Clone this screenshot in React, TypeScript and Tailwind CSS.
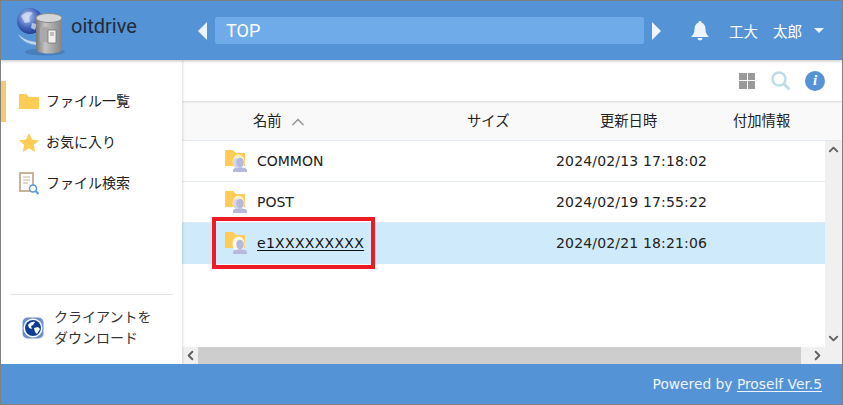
import React from 'react';
import { ChevronLeft, ChevronRight, ChevronUp, ChevronDown } from 'lucide-react';

const FONT = "font-['DejaVu_Sans','Noto_Sans_CJK_JP',sans-serif]";

const FolderIcon = () => (
  <svg width="20" height="15" viewBox="0 0 20 15">
    <path d="M0 0h7l3 3h10v12H0z" fill="#ffcc55" />
  </svg>
);

const SharedFolderIcon = ({ single }: { single?: boolean }) => (
  <svg width="24" height="22" viewBox="0 0 24 22">
    <path d="M0 0h8l3 3h9v13H0z" fill="#ffcc55" />
    <ellipse cx="13.500" cy="12" rx="6" ry="7.500" fill="#ffffff" opacity={single ? 0.9 : 0.7} />
    {!single && <ellipse cx="11" cy="13" rx="3" ry="5" fill="#d5d6ea" />}
    <ellipse cx="15" cy="12.500" rx="3.800" ry="4.800" fill="#b7b9dc" />
    <path d="M8 22v-2c0-1.800 4-2.800 7-2.800s7 1 7 2.800v2z" fill="#b7b9dc" />
  </svg>
);

const StarIcon = () => (
  <svg width="20" height="19" viewBox="0 0 20 19">
    <path d="M10 0l3 6.400 7 .8-5.200 4.700 1.400 7L10 15.300 3.800 18.900l1.400-7L0 7.200l7-.8z" fill="#ffcc55" />
  </svg>
);

const SearchDocIcon = () => (
  <svg width="21" height="23" viewBox="0 0 21 23">
    <path d="M1 1h13v18H1z" fill="#fff" stroke="#c8b396" strokeWidth="2" />
    <path d="M4 5h7M4 8h7M4 11h5" stroke="#c8b396" strokeWidth="1" />
    <circle cx="14" cy="16.500" r="3.500" fill="#fff" stroke="#5a97dc" strokeWidth="1.500" />
    <path d="M16.500 19l3 3" stroke="#5a97dc" strokeWidth="2" />
  </svg>
);

const GlobeBadge = () => (
  <svg width="22" height="22" viewBox="0 0 22 22">
    <rect x="0.500" y="0.500" width="21" height="21" rx="5" fill="#6d8fcb" />
    <circle cx="11" cy="11" r="9.500" fill="#fff" />
    <circle cx="11" cy="11" r="8" fill="#0f3c96" />
    <path d="M6 8c2-3 5-4 7-3l-2 3-2 1 1 3-3-1zM12 11l4-1 2 2-3 5-2-2z" fill="#fff" />
  </svg>
);

const AppLogo = () => (
  <svg width="52" height="50" viewBox="0 0 52 50">
    <defs>
      <radialGradient id="globe" cx="40%" cy="35%" r="70%">
        <stop offset="0%" stopColor="#b4cbf2" />
        <stop offset="60%" stopColor="#3f62b8" />
        <stop offset="100%" stopColor="#1d3a8c" />
      </radialGradient>
      <linearGradient id="can" x1="0" y1="0" x2="1" y2="0">
        <stop offset="0%" stopColor="#777" />
        <stop offset="35%" stopColor="#c4c4c4" />
        <stop offset="100%" stopColor="#858585" />
      </linearGradient>
    </defs>
    <ellipse cx="30" cy="46" rx="20" ry="3.500" fill="#3f6fa8" opacity="0.6" />
    <path d="M3 28c6 6 14 8 20 8v3C14 39 7 35 3 28z" fill="#e8eef8" opacity="0.7" />
    <circle cx="15" cy="15" r="13" fill="url(#globe)" />
    <path d="M6 10c4-4 8-5 12-3l-4 4 1 5-5 1zM17 17l5 1-2 6-4-2z" fill="#dfe6f5" opacity="0.7" />
    <path d="M21 12v31c0 3 6 4.500 13 4.500S47 46 47 43V12z" fill="url(#can)" />
    <ellipse cx="34" cy="12" rx="13" ry="4.500" fill="#d4d6d8" stroke="#8a8a8a" />
    <path d="M25 21h8l3 3v12H25z" fill="#a9a9a9" />
    <path d="M33 24h8v13h-8z" fill="#efefef" stroke="#777" strokeWidth="0.800" />
    <path d="M35 27h4M35 29h4" stroke="#777" strokeWidth="0.800" />
  </svg>
);

const NavItem = ({ icon, label, active }: { icon: React.ReactNode; label: string; active?: boolean }) => (
  <div className={`flex h-[41px] items-center text-[14px] text-[#222] ${active ? 'border-l-[5px] border-[#f5c871] pl-[13px]' : 'pl-[18px]'}`}>
    <span className="flex w-[27px] justify-start">{icon}</span>
    <span>{label}</span>
  </div>
);

const rows = [
  { name: 'COMMON', date: '2024/02/13 17:18:02' },
  { name: 'POST', date: '2024/02/19 17:55:22' },
  { name: 'e1XXXXXXXXX', date: '2024/02/21 18:21:06', selected: true },
];

export default function App() {
  return (
    <div className={`flex h-[405px] w-[843px] flex-col overflow-hidden border border-[#808080] bg-white ${FONT}`}>
      {/* header */}
      <header className="z-20 flex h-[59px] shrink-0 items-center bg-[#5593d7] shadow-[0_1px_3px_rgba(0,0,0,0.25)]">
        <div className="flex w-[195px] items-center pl-[14px] pt-[1px]">
          <AppLogo />
          <span className="-mt-[10px] ml-[4px] font-['Roboto',sans-serif] text-[20px] text-[#222b38]">oitdrive</span>
        </div>
        <svg width="9" height="18" viewBox="0 0 9 18" className="ml-[2px]"><path d="M9 0v18L0 9z" fill="#eef4fb" /></svg>
        <div className="ml-[8px] flex h-[27px] w-[429px] items-center rounded-[2px] bg-[#6faae9] pl-[11px] font-['Roboto',sans-serif] text-[18px] text-white">TOP</div>
        <svg width="9" height="18" viewBox="0 0 9 18" className="ml-[8px]"><path d="M0 0v18l9-9z" fill="#eef4fb" /></svg>
        <svg width="18" height="20" viewBox="0 0 18 20" className="ml-[30px]">
          <path d="M9 0a1.500 1.500 0 0 1 1.500 1.700C13 2.400 14.500 4.600 14.500 8c0 3.500 1 5.500 3.500 8H0c2.500-2.500 3.500-4.500 3.500-8 0-3.400 1.500-5.600 4-6.300A1.500 1.500 0 0 1 9 0z" fill="#eef4fb" />
          <path d="M6.500 17h5a2.500 2.500 0 0 1-5 0z" fill="#eef4fb" />
        </svg>
        <span className="ml-[20px] font-['Noto_Sans_CJK_JP',sans-serif] text-[14.500px] text-white">工大</span>
        <span className="ml-[15px] font-['Noto_Sans_CJK_JP',sans-serif] text-[14.500px] text-white">太郎</span>
        <svg width="10" height="5" viewBox="0 0 10 5" className="ml-[12px]"><path d="M0 0h10L5 5z" fill="#eef4fb" /></svg>
      </header>

      <div className="flex min-h-0 flex-1">
        {/* sidebar */}
        <aside className="z-10 flex w-[181px] shrink-0 flex-col bg-white shadow-[1px_0_2px_rgba(0,0,0,0.12)]">
          <nav className="flex flex-col pt-[21px]">
            <NavItem active icon={<FolderIcon />} label="ファイル一覧" />
            <NavItem icon={<StarIcon />} label="お気に入り" />
            <NavItem icon={<SearchDocIcon />} label="ファイル検索" />
          </nav>
          <div className="mx-[9px] mt-auto flex h-[70px] items-center border-t border-[#e4e4ec] pb-[3px] pl-[12px] text-[14px] leading-[21px] text-[#333]">
            <GlobeBadge />
            <span className="ml-[10px]">クライアントを<br />ダウンロード</span>
          </div>
        </aside>

        {/* main */}
        <main className="flex min-w-0 flex-1 flex-col">
          <div className="z-[5] flex h-[41px] shrink-0 items-center justify-end bg-white pr-[17px] shadow-[0_1px_2px_rgba(0,0,0,0.15)]">
            <div className="grid h-[16px] w-[16px] grid-cols-2 gap-[1px]">
              <span className="bg-[#9a9a9a]" /><span className="bg-[#9a9a9a]" /><span className="bg-[#9a9a9a]" /><span className="bg-[#9a9a9a]" />
            </div>
            <svg width="20" height="20" viewBox="0 0 20 20" className="ml-[16px]">
              <circle cx="8" cy="8" r="6.500" fill="none" stroke="#c0dcec" strokeWidth="2.500" />
              <path d="M12.500 12.500l6 6" stroke="#c0dcec" strokeWidth="3" />
            </svg>
            <span className="ml-[14px] flex h-[20px] w-[20px] items-center justify-center rounded-full bg-[#5593d7] font-['Liberation_Serif',serif] text-[15px] font-bold italic leading-none text-white">i</span>
          </div>

          <div className="flex h-[40px] shrink-0 items-center border-b border-[#e3e9f0] bg-[#f9f9f9] pt-[2px] text-[14.300px] text-[#222]">
            <span className="ml-[71px] flex w-[214px] items-center">名前<ChevronUp size={20} className="ml-[6px] text-[#999]" /></span>
            <span className="w-[133px]">サイズ</span>
            <span className="w-[133px]">更新日時</span>
            <span>付加情報</span>
          </div>

          <div className="flex min-h-0 flex-1">
            <div className="flex min-w-0 flex-1 flex-col">
              {rows.map((r) => (
                <div key={r.name} className={`relative flex h-[41px] shrink-0 items-center border-b pl-[43px] text-[14px] text-[#222] ${r.selected ? 'border-transparent bg-[#cfeafb]' : 'border-[#e3e9f0] bg-white'}`}>
                  <SharedFolderIcon single={r.selected} />
                  <span className={`ml-[8px] w-[299px] ${r.selected ? 'text-[#111] underline underline-offset-2 tracking-[0.3px]' : ''}`}>{r.name}</span>
                  <span className="tracking-[0.16px]">{r.date}</span>
                  {r.selected && <div className="absolute left-[30px] top-[-6px] h-[52px] w-[163px] border-[4px] border-[#ed1c24]" />}
                </div>
              ))}
            </div>
            <div className="flex w-[17px] shrink-0 flex-col items-center justify-between bg-[#f0f0f0] text-[#606060]">
              <ChevronUp size={15} strokeWidth={3} className="mt-[1px]" />
              <ChevronDown size={15} strokeWidth={3} className="mb-[1px]" />
            </div>
          </div>

          <div className="flex h-[17px] shrink-0 items-center bg-[#f0f0f0] text-[#606060]">
            <span className="flex w-[16px] justify-center"><ChevronLeft size={15} strokeWidth={3} /></span>
            <span className="h-full flex-1 bg-[#cdcdcd]" />
            <span className="flex w-[41px] justify-start pl-[9px]"><ChevronRight size={15} strokeWidth={3} /></span>
          </div>
        </main>
      </div>

      {/* footer */}
      <footer className="z-20 flex h-[40px] shrink-0 items-center justify-end bg-[#5593d7] pr-[20px] text-[13.800px] text-[#eef4fb]">
        Powered by&nbsp;<span className="underline underline-offset-2">Proself Ver.5</span>
      </footer>
    </div>
  );
}
